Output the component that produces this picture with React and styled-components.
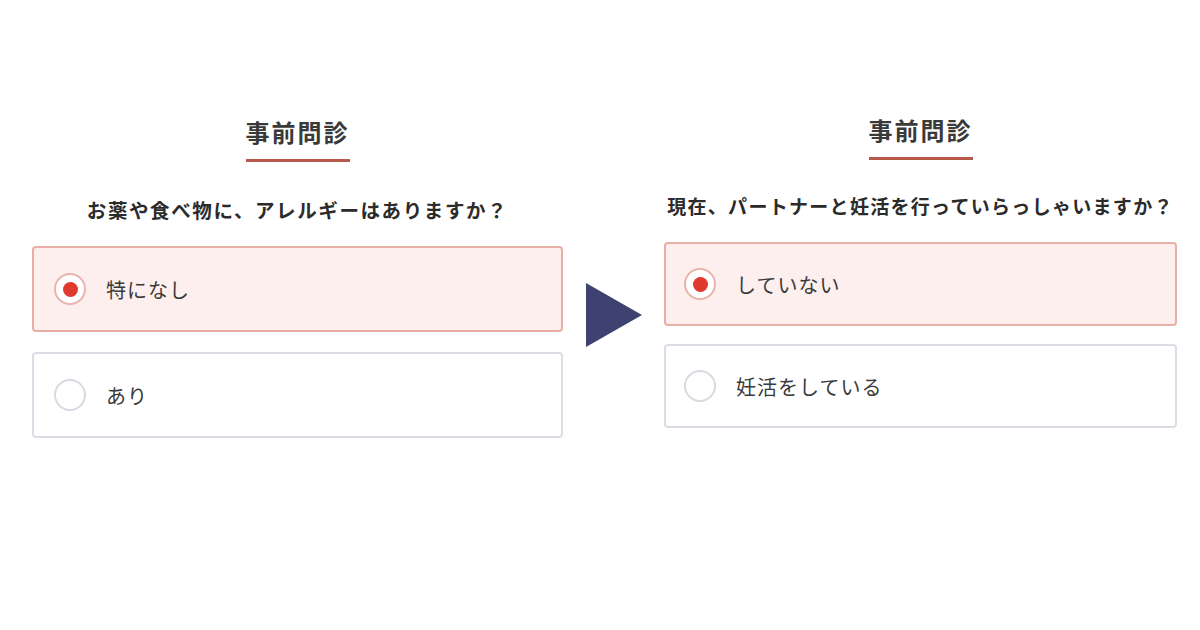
import React from "react";
import styled, { createGlobalStyle } from "styled-components";

const GlobalStyle = createGlobalStyle`
	html, body {
		margin: 0;
		padding: 0;
		background: #ffffff;
	}

	body {
		font-family: "Noto Sans CJK JP", "Noto Sans", sans-serif;
		color: #333333;
	}
`;

const panels = [
	{
		width: 531,
		top: 115,
		gapTitle: 34,
		qSize: 19.5,
		qSpacing: 1.6,
		cardGap: 20,
		cardHeight: 86,
		padLeft: 20,
		question: "お薬や食べ物に、アレルギーはありますか？",
		options: [
			{ label: "特になし", checked: true },
			{ label: "あり", checked: false }
		]
	},
	{
		width: 513,
		top: 113,
		gapTitle: 32,
		qSize: 19,
		qSpacing: 1.3,
		cardGap: 18,
		cardHeight: 84,
		padLeft: 18,
		question: "現在、パートナーと妊活を行っていらっしゃいますか？",
		options: [
			{ label: "していない", checked: true },
			{ label: "妊活をしている", checked: false }
		]
	}
];

function Panel({ panel }) {
	return (
		<PanelCont width={panel.width} top={panel.top}>
			<Title>事前問診</Title>
			<Underline />
			<Question gap={panel.gapTitle} size={panel.qSize} spacing={panel.qSpacing}>
				{panel.question}
			</Question>
			<Options gap={panel.cardGap}>
				{panel.options.map(opt => (
					<Card key={opt.label} checked={opt.checked} height={panel.cardHeight} padLeft={panel.padLeft}>
						<Radio checked={opt.checked} />
						<Label>{opt.label}</Label>
					</Card>
				))}
			</Options>
		</PanelCont>
	);
}

export default function App() {
	return (
		<Page>
			<GlobalStyle />
			<Panel panel={panels[0]} />
			<Arrow>
				<svg width="56" height="64" viewBox="0 0 56 64">
					<polygon points="0,0 56,32 0,64" fill="#3d4270" />
				</svg>
			</Arrow>
			<Panel panel={panels[1]} />
		</Page>
	);
}

const Page = styled.div`
	width: 1200px;
	height: 630px;
	display: flex;
	align-items: flex-start;
	padding-left: 32px;
	box-sizing: border-box;
`;

const PanelCont = styled.div`
	width: ${props => props.width}px;
	flex-shrink: 0;
	padding-top: ${props => props.top}px;
	display: flex;
	flex-direction: column;
	align-items: center;
`;

const Title = styled.div`
	font-size: 24px;
	line-height: 34px;
	font-weight: bold;
	letter-spacing: 2px;
	color: #3a3a3a;
`;

const Underline = styled.div`
	width: 104px;
	height: 3px;
	margin-top: 10px;
	background-color: #b9594c;
`;

const Question = styled.div`
	margin-top: ${props => props.gap}px;
	font-size: ${props => props.size}px;
	line-height: 28px;
	font-weight: bold;
	letter-spacing: ${props => props.spacing}px;
	color: #2b2b2b;
	white-space: nowrap;
`;

const Options = styled.div`
	width: 100%;
	margin-top: 22px;
	display: flex;
	flex-direction: column;
	gap: ${props => props.gap}px;
`;

const Card = styled.div`
	height: ${props => props.height}px;
	box-sizing: border-box;
	display: flex;
	align-items: center;
	gap: 20px;
	padding-left: ${props => props.padLeft}px;
	border: 2px solid ${props => props.checked ? "#e9aea5" : "#dcdce6"};
	border-radius: 4px;
	background-color: ${props => props.checked ? "#fcefed" : "#ffffff"};
`;

const Radio = styled.div`
	width: 32px;
	height: 32px;
	box-sizing: border-box;
	border-radius: 50%;
	border: 2px solid ${props => props.checked ? "#eab3ab" : "#d9d9e2"};
	background-color: #ffffff;
	display: flex;
	align-items: center;
	justify-content: center;
	flex-shrink: 0;

	&::after {
		content: "";
		display: ${props => props.checked ? "block" : "none"};
		width: 15px;
		height: 15px;
		border-radius: 50%;
		background-color: #e1392e;
	}
`;

const Label = styled.div`
	font-size: 20px;
	letter-spacing: 1px;
	color: #3a3a3a;
`;

const Arrow = styled.div`
	margin: 283px 22px 0 23px;
	flex-shrink: 0;
	display: flex;
`;
